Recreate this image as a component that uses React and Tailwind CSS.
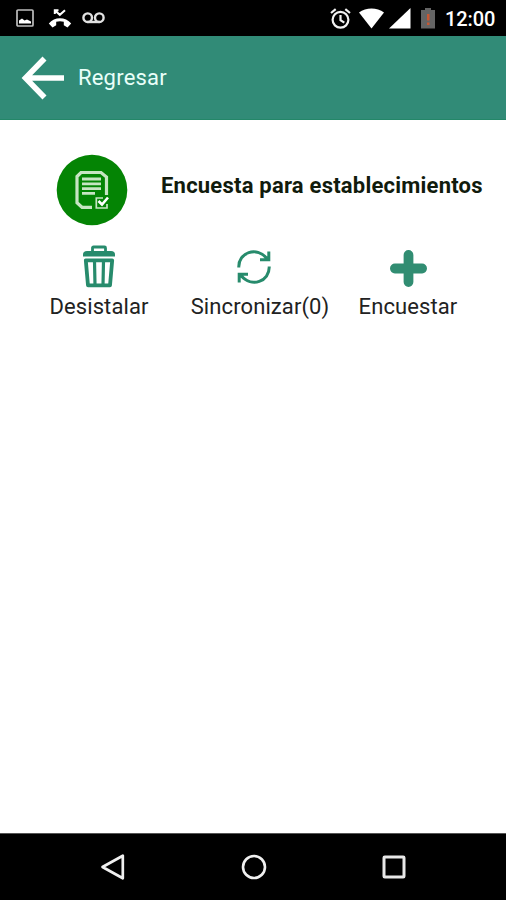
function StatusBar() {
  return (
    <div className="flex h-9 items-center bg-black pl-[16px] pr-[10px] text-white">
      <svg className="h-[18px] w-[18px]" viewBox="0 0 18 18">
        <rect x="1" y="1" width="16" height="16" rx="1" fill="none" stroke="#bdbdbd" strokeWidth="1.7" />
        <path d="M3 14.5V11.5L6 9.5L8.5 11.5L11 10.5L15 12.5V14.5Z" fill="#fff" />
      </svg>
      <svg className="ml-[14px] h-[19px] w-[24px]" viewBox="0 0 24 19" fill="none">
        <path d="M6.8 5V1.2H10.5M7 1.4L11.8 5.8L17 1.2" stroke="#fff" strokeWidth="2" />
        <path d="M.8 14.4C6.5 7.4 17.5 7.4 23.2 14.4L19.5 18.5L15.8 16.2V12.8C13.5 12 10.5 12 8.2 12.8V16.2L4.5 18.5Z" fill="#fff" />
      </svg>
      <svg className="ml-[10px] h-[12px] w-[23px]" viewBox="0 0 23 12" fill="none" stroke="#e2e2e2" strokeWidth="2.4">
        <circle cx="5.7" cy="5.7" r="4.3" />
        <circle cx="17.3" cy="5.7" r="4.3" />
        <path d="M5.7 10H17.3" />
      </svg>
      <svg className="ml-auto h-[21px] w-[21px]" viewBox="0 0 21 21" fill="none" stroke="#f2f2f2" strokeWidth="2.2">
        <circle cx="10.5" cy="11.8" r="7.9" />
        <path d="M1 5L5.7 1.2M20 5L15.3 1.2M10.5 7V12.2L14.3 14.6" />
      </svg>
      <svg className="ml-[8px] h-[21px] w-[25px]" viewBox="0 0 25 21">
        <path d="M0 4.5C7-.8 18-.8 25 4.5L12.5 20.5Z" fill="#fff" />
      </svg>
      <svg className="ml-[5px] h-[21px] w-[22px]" viewBox="0 0 22 21">
        <path d="M21.5 0V20.5H0Z" fill="#fff" />
      </svg>
      <svg className="ml-[10px] h-[21px] w-[14px]" viewBox="0 0 14 21">
        <path d="M4 0H10V2H14V20.5H0V2H4Z" fill="#646464" />
        <path d="M6 6H8.5V12.5H6ZM6 14.5H8.5V17H6Z" fill="#c75732" />
      </svg>
      <span className="ml-[10px] mt-[2px] w-[51px] whitespace-nowrap text-[20px] font-medium leading-6 tracking-[-0.1px]">12:00</span>
    </div>
  );
}

function Header() {
  return (
    <header className="flex h-[84px] items-center border-b border-[#238768] bg-[#318b77] pl-[21px] text-white">
      <svg className="h-[44px] w-[43px]" viewBox="0 0 43 44" fill="none" stroke="#fff" strokeWidth="5.6">
        <path d="M23.5 2.5L4.5 22L23.5 41.5M4.5 22H43" />
      </svg>
      <span className="ml-[14px] text-[22px] leading-7 tracking-[0.2px] text-[#e9fff9]">Regresar</span>
    </header>
  );
}

function SurveyIcon() {
  return (
    <svg className="h-[72px] w-[72px]" viewBox="0 0 72 72" fill="none">
      <circle cx="36" cy="36" r="35.3" fill="#048404" />
      <g stroke="#c6e5c2" strokeWidth="3.2">
        <path d="M36 53.3H26L21 48.8V22.5L25 18.5H45L50.5 23V41" />
        <path d="M26 25H45M26 29.8H45M26 34.6H45M26 39.4H39" strokeWidth="2.8" />
        <path d="M47 44H40.3V54H51V50" strokeWidth="1.7" />
        <path d="M42.5 47L46 50.5L52 43.5" stroke="#fff" strokeWidth="2.6" />
      </g>
    </svg>
  );
}

function TrashIcon() {
  return (
    <svg className="h-[44px] w-[34px]" viewBox="0 0 34 44" fill="none" stroke="#278b6c">
      <path d="M10.5 7V3Q10.5 2 11.5 2H22.5Q23.5 2 23.5 3V7" strokeWidth="2.8" />
      <path d="M1 11.5V9.5Q1 6 5 6H29Q33 6 33 9.5V11.5Z" fill="#278b6c" stroke="none" />
      <path d="M3.8 15.4H30.2L28 40.3H6Z" strokeWidth="3.8" strokeLinejoin="round" />
      <path d="M12.5 16L13 40M21.5 16L21 40" strokeWidth="3.2" />
    </svg>
  );
}

function SyncIcon() {
  return (
    <svg className="h-[36px] w-[36px]" viewBox="0 0 36 36" fill="none" stroke="#278b6c" strokeWidth="3">
      <path d="M2.8 18.5C2.2 3.5 20.5-3.2 31 9.5M32.8 2.5V10.8H24" />
      <path d="M33.2 17.5C33.8 32.5 15.5 39.2 5 26.5M3.2 33.5V25.2H12" />
      <path d="M27.5 11.5L33 6V11.5ZM8.5 24.5L3 30V24.5Z" fill="#278b6c" stroke="none" />
    </svg>
  );
}

function PlusIcon() {
  return (
    <svg className="mt-[3px] h-[37px] w-[37px]" viewBox="0 0 36 36" fill="none" stroke="#318d72" strokeWidth="9.5" strokeLinecap="round">
      <path d="M18 4.75V31.25M4.75 18H31.25" />
    </svg>
  );
}

function Action({ icon, label, iconClass = "" }) {
  return (
    <button className="flex flex-col items-center">
      <span className={`flex h-[48px] items-center justify-center ${iconClass}`}>{icon}</span>
      <span className="mt-[2px] whitespace-nowrap text-[22px] leading-7 tracking-[0.1px] text-[#222]">{label}</span>
    </button>
  );
}

function NavigationBar() {
  return (
    <nav className="flex h-[67px] items-center justify-between border-t border-[#555] bg-black pl-[100px] pr-[100px]">
      <svg className="h-[28px] w-[26px]" viewBox="0 0 26 28" fill="none" stroke="#f0f0f0" strokeWidth="2.7">
        <path d="M2.5 14L22.8 2.7V25.3Z" strokeLinejoin="round" />
      </svg>
      <svg className="h-[26px] w-[26px]" viewBox="0 0 26 26" fill="none" stroke="#f0f0f0" strokeWidth="2.6">
        <circle cx="13" cy="13" r="11" />
      </svg>
      <svg className="h-[24px] w-[24px]" viewBox="0 0 24 24" fill="none" stroke="#e8e8e8" strokeWidth="3">
        <rect x="2" y="2" width="20" height="20" rx="0.8" />
      </svg>
    </nav>
  );
}

export default function App() {
  return (
    <div className="flex h-[900px] w-[506px] flex-col overflow-hidden bg-white font-['Roboto',sans-serif]">
      <StatusBar />
      <Header />
      <main className="flex-1 pt-[34px]">
        <div className="flex h-[72px] items-center pl-[56px]">
          <SurveyIcon />
          <h1 className="ml-[33px] mt-[-9px] whitespace-nowrap text-[22px] font-bold leading-7 tracking-[0.22px] text-[#111b0c]">
            Encuesta para establecimientos
          </h1>
        </div>
        <div className="mt-[17px] flex pl-[49px]">
          <div className="flex w-[100px] justify-center">
            <Action icon={<TrashIcon />} label="Desistalar" />
          </div>
          <div className="ml-[41px] flex w-[140px] justify-center">
            <Action icon={<SyncIcon />} label="Sincronizar(0)" iconClass="mr-[13px]" />
          </div>
          <div className="ml-[28px] flex w-[100px] justify-center">
            <Action icon={<PlusIcon />} label="Encuestar" />
          </div>
        </div>
      </main>
      <NavigationBar />
    </div>
  );
}
